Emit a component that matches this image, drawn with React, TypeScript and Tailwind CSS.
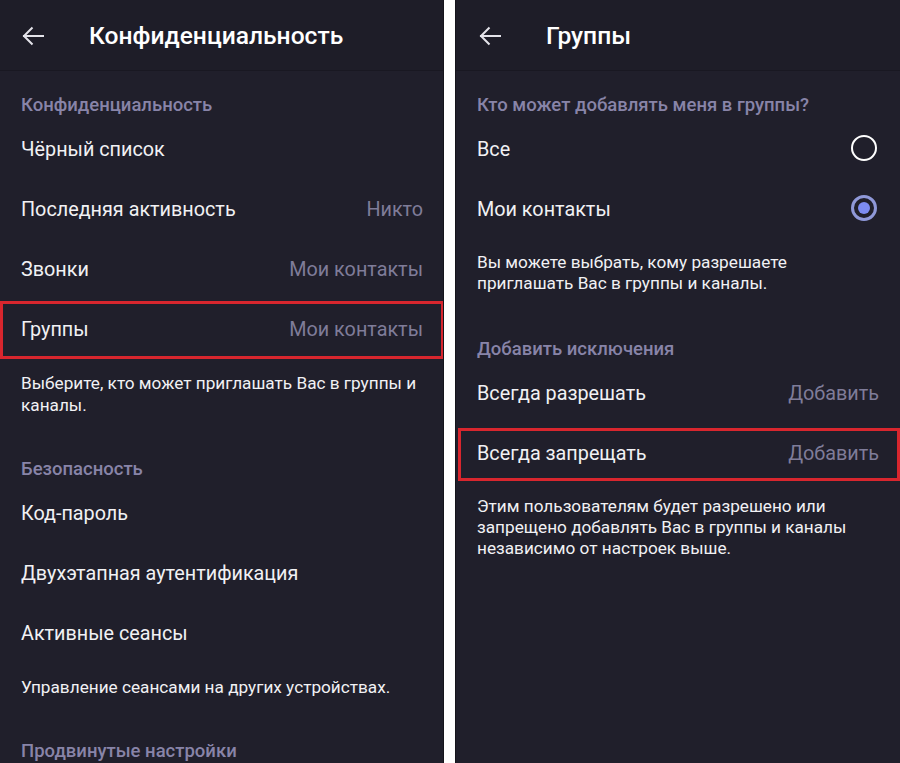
import React from "react";

const FONT = { fontFamily: "Roboto, 'Noto Sans', 'Liberation Sans', sans-serif" };

function Back() {
  return (
    <svg width="22" height="20" viewBox="0 0 22 20" fill="none" stroke="#e4e3ea" strokeWidth="2" strokeLinecap="square">
      <path d="M2 10H21" />
      <path d="M10.5 1.5L2 10L10.5 18.5" strokeLinecap="butt" />
    </svg>
  );
}

function Header({ title, arrowPad, titleLeft }: { title: string; arrowPad: string; titleLeft: string }) {
  return (
    <div className="h-[71px] flex items-center bg-[#1e1d28] border-b border-[#191822]">
      <div className={`${arrowPad} pt-[2px]`}>
        <Back />
      </div>
      <div className={`${titleLeft} pt-[3px] text-[24.6px] font-medium text-white`}>{title}</div>
    </div>
  );
}

function Section({ children, pr }: { children: React.ReactNode; pr?: string }) {
  return (
    <div className={`h-[47px] flex items-end pb-[3px] pl-[21px] ${pr ?? "pr-[21px]"}`}>
      <div className="text-[18.5px] leading-[20px] font-medium text-[#8884a8] whitespace-nowrap">{children}</div>
    </div>
  );
}

function Row({ label, value, boxed, right, pr }: { label: string; value?: string; boxed?: string; right?: React.ReactNode; pr?: string }) {
  return (
    <div className={`relative h-[60px] flex items-center justify-between pl-[21px] ${pr ?? "pr-[21px]"}`}>
      <span className="pt-[3px] text-[19.8px] text-[#f1f1f4] whitespace-nowrap">{label}</span>
      {value && <span className="pt-[3px] text-[19.8px] text-[#7f7c99] whitespace-nowrap">{value}</span>}
      {right}
      {boxed && <div className={`absolute border-[3px] border-[#d8262e] ${boxed}`} />}
    </div>
  );
}

function Desc({ children, cls }: { children: React.ReactNode; cls: string }) {
  return <div className={`px-[21px] text-[17.2px] text-[#f1f1f4] whitespace-nowrap ${cls}`}>{children}</div>;
}

function Radio({ on }: { on?: boolean }) {
  if (on) {
    return (
      <div className="w-[26px] h-[26px] rounded-full border-[3px] border-[#8f98d8] flex items-center justify-center mr-[2px]">
        <div className="w-[12px] h-[12px] rounded-full bg-[#7d8cf2]" />
      </div>
    );
  }
  return <div className="w-[26px] h-[26px] rounded-full border-[2.5px] border-white mr-[2px]" />;
}

export default function App() {
  return (
    <div className="flex w-[900px] h-[763px] overflow-hidden bg-white" style={FONT}>
      <div className="w-[444px] h-full bg-[#201f2b] border-r border-[#15141b] overflow-hidden">
        <Header title="Конфиденциальность" arrowPad="pl-[22px]" titleLeft="ml-[45px]" />
        <Section>Конфиденциальность</Section>
        <Row label="Чёрный список" pr="pr-[20px]" />
        <Row label="Последняя активность" value="Никто" pr="pr-[20px]" />
        <Row label="Звонки" value="Мои контакты" pr="pr-[20px]" />
        <Row label="Группы" value="Мои контакты" pr="pr-[20px]" boxed="top-[3px] -bottom-[1px] left-0 -right-[1px]" />
        <Desc cls="pt-[14px] pb-[19px] leading-[22px]">
          Выберите, кто может приглашать Вас в группы и
          <br />
          каналы.
        </Desc>
        <Section>Безопасность</Section>
        <Row label="Код-пароль" />
        <Row label="Двухэтапная аутентификация" />
        <Row label="Активные сеансы" />
        <Desc cls="pt-[14px] pb-[19px] leading-[22px]">Управление сеансами на других устройствах.</Desc>
        <Section>Продвинутые настройки</Section>
      </div>
      <div className="w-[11px] h-full bg-white" />
      <div className="w-[445px] h-full bg-[#201f2b] border-l border-[#15141b] overflow-hidden">
        <Header title="Группы" arrowPad="pl-[23px]" titleLeft="ml-[45px]" />
        <Section>Кто может добавлять меня в группы?</Section>
        <Row label="Все" right={<Radio />} />
        <Row label="Мои контакты" right={<Radio on />} />
        <Desc cls="pt-[14px] pb-[21px] leading-[21px]">
          Вы можете выбрать, кому разрешаете
          <br />
          приглашать Вас в группы и каналы.
        </Desc>
        <Section>Добавить исключения</Section>
        <Row label="Всегда разрешать" value="Добавить" />
        <Row label="Всегда запрещать" value="Добавить" boxed="top-[6px] bottom-[1px] left-[2px] right-0" />
        <Desc cls="pt-[14px] pb-[20px] leading-[21px]">
          Этим пользователям будет разрешено или
          <br />
          запрещено добавлять Вас в группы и каналы
          <br />
          независимо от настроек выше.
        </Desc>
      </div>
    </div>
  );
}
